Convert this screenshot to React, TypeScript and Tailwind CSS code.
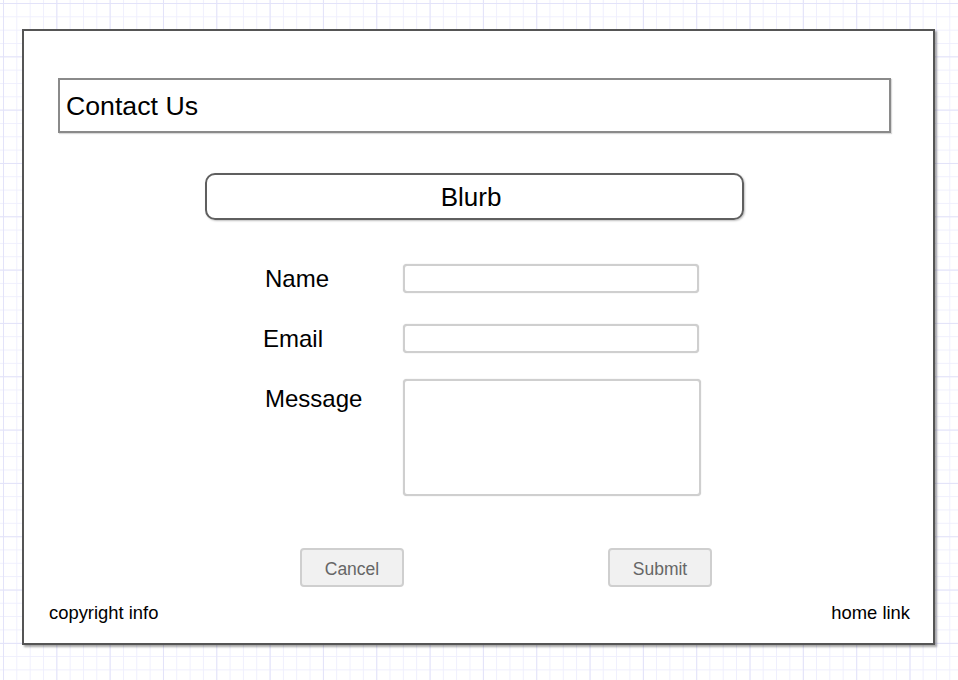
const Field = ({ label, labelClass, className }: { label: string; labelClass?: string; className?: string }) => (
  <div className={"flex items-center " + (className ?? "")}>
    <span className={"w-[138px] text-[24px] leading-none " + (labelClass ?? "")}>{label}</span>
    <div className="w-[296px] h-[29px] rounded-[4px] border-2 border-[#cfcfcf] shadow-[0_0_1px_rgba(0,0,0,0.25)] bg-white" />
  </div>
);

export default function App() {
  return (
    <div className="w-[958px] h-[680px] overflow-hidden bg-white bg-[linear-gradient(to_right,#e3e3f9_1px,transparent_1px),linear-gradient(to_bottom,#e3e3f9_1px,transparent_1px),linear-gradient(to_right,#efeffd_1px,transparent_1px),linear-gradient(to_bottom,#efeffd_1px,transparent_1px)] [background-size:53.33px_53.33px,53.33px_53.33px,13.33px_13.33px,13.33px_13.33px] [background-position:3px_3px] pt-[29px] pl-[22px] font-['Liberation_Sans',Arial,sans-serif] text-black">
      <div className="w-[913px] h-[616px] border-[2px] border-[#555] bg-white shadow-[2px_2px_2px_rgba(0,0,0,0.35)] flex flex-col">
        <div className="mt-[47px] ml-[34px] w-[833px] h-[55px] border-2 border-[#8a8a8a] shadow-[1px_1px_1px_rgba(0,0,0,0.15)] flex items-center pl-[6px] pt-[2px] text-[26.7px]">
          Contact Us
        </div>

        <div className="mt-[40px] ml-[181px] w-[539px] h-[47px] rounded-[10px] border-2 border-[#5f5f5f] shadow-[1px_1px_2px_rgba(0,0,0,0.25)] flex items-center justify-center pr-[7px] pt-[2px] text-[26px]">
          Blurb
        </div>

        <div className="ml-[241px] flex flex-col">
          <Field label="Name" className="mt-[44px]" />
          <Field label="Email" labelClass="-ml-[2px] mr-[2px]" className="mt-[31px]" />
          <div className="mt-[26px] flex items-start">
            <span className="w-[138px] text-[24px] leading-none mt-[8px]">Message</span>
            <div className="w-[298px] h-[117px] rounded-[4px] border-2 border-[#cfcfcf] shadow-[0_0_1px_rgba(0,0,0,0.25)] bg-white" />
          </div>
        </div>

        <div className="mt-[52px] ml-[276px] flex gap-[204px]">
          <button className="w-[104px] h-[39px] pt-[3px] rounded-[4px] border-2 border-[#cfcfcf] bg-[#f1f1f1] text-[17.5px] text-[#666]">Cancel</button>
          <button className="w-[104px] h-[39px] pt-[3px] rounded-[4px] border-2 border-[#cfcfcf] bg-[#f1f1f1] text-[17.5px] text-[#666]">Submit</button>
        </div>

        <div className="mt-[15px] pl-[25px] pr-[23px] flex justify-between text-[18.4px] leading-[21px]">
          <span>copyright info</span>
          <span>home link</span>
        </div>
      </div>
    </div>
  );
}
